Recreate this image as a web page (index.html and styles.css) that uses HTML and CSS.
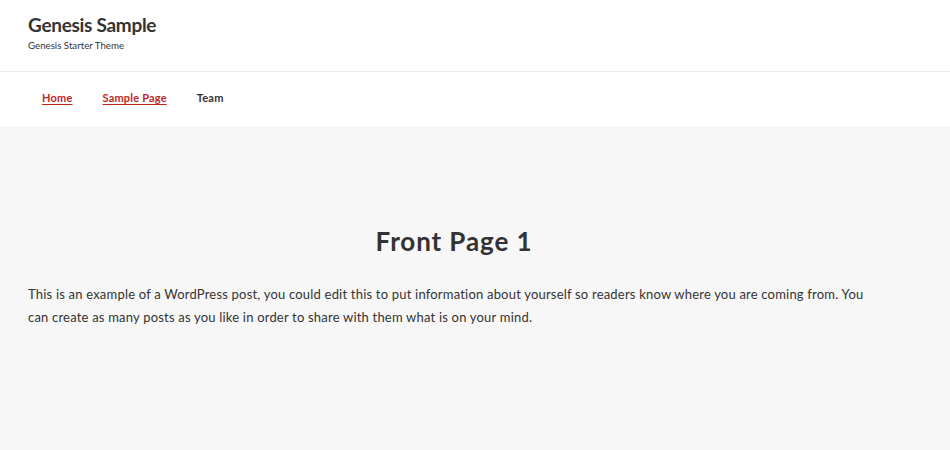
FILE: index.html
```html
<!DOCTYPE html>
<html lang="en">
<head>
<meta charset="utf-8">
<title>Genesis Sample</title>
<link rel="stylesheet" href="styles.css">
</head>
<body>
<header class="site-header">
  <div class="title-area">
    <p class="site-title">Genesis Sample</p>
    <p class="site-description">Genesis Starter Theme</p>
  </div>
</header>
<nav class="nav-primary">
  <ul class="menu">
    <li><a class="link" href="#">Home</a></li>
    <li><a class="link" href="#">Sample Page</a></li>
    <li><span class="plain">Team</span></li>
  </ul>
</nav>
<main class="content">
  <h1 class="entry-title">Front Page 1</h1>
  <p class="entry-text">This is an example of a WordPress post, you could edit this to put information about yourself so readers know where you are coming from. You can create as many posts as you like in order to share with them what is on your mind.</p>
</main>
</body>
</html>
```
FILE: styles.css
```css
html, body {
  margin: 0;
  padding: 0;
  height: 100%;
}
body {
  font-family: "Lato", "Noto Sans", sans-serif;
  color: #333;
  background: #f7f7f7;
  display: flex;
  flex-direction: column;
}
.site-header {
  background: #fff;
  border-bottom: 1px solid #eee;
  height: 72px;
  box-sizing: border-box;
  padding: 13px 28px 0;
}
.site-title {
  margin: 0;
  font-size: 19px;
  font-weight: 700;
  line-height: 24px;
  letter-spacing: -0.3px;
}
.site-description {
  margin: 2px 0 0;
  font-size: 9.7px;
  line-height: 12px;
}
.nav-primary {
  background: #fff;
  height: 54px;
  box-sizing: border-box;
  padding: 0 27px 4px;
  display: flex;
  align-items: center;
}
.menu {
  list-style: none;
  margin: 0;
  padding: 0;
  display: flex;
}
.menu li {
  padding: 0 15px;
  font-size: 11px;
  font-weight: 700;
  letter-spacing: 0.2px;
}
.link {
  color: #c3251d;
  text-decoration: underline;
  text-underline-offset: 2px;
}
.plain {
  color: #333;
}
.content {
  flex: 1;
  padding: 99px 70px 0 28px;
}
.entry-title {
  margin: 0 0 26px;
  text-align: center;
  font-size: 26px;
  font-weight: 700;
  line-height: 32px;
  letter-spacing: 0.9px;
}
.entry-text {
  margin: 0;
  font-size: 13px;
  line-height: 23px;
  letter-spacing: 0.2px;
  max-width: 842px;
}
```
